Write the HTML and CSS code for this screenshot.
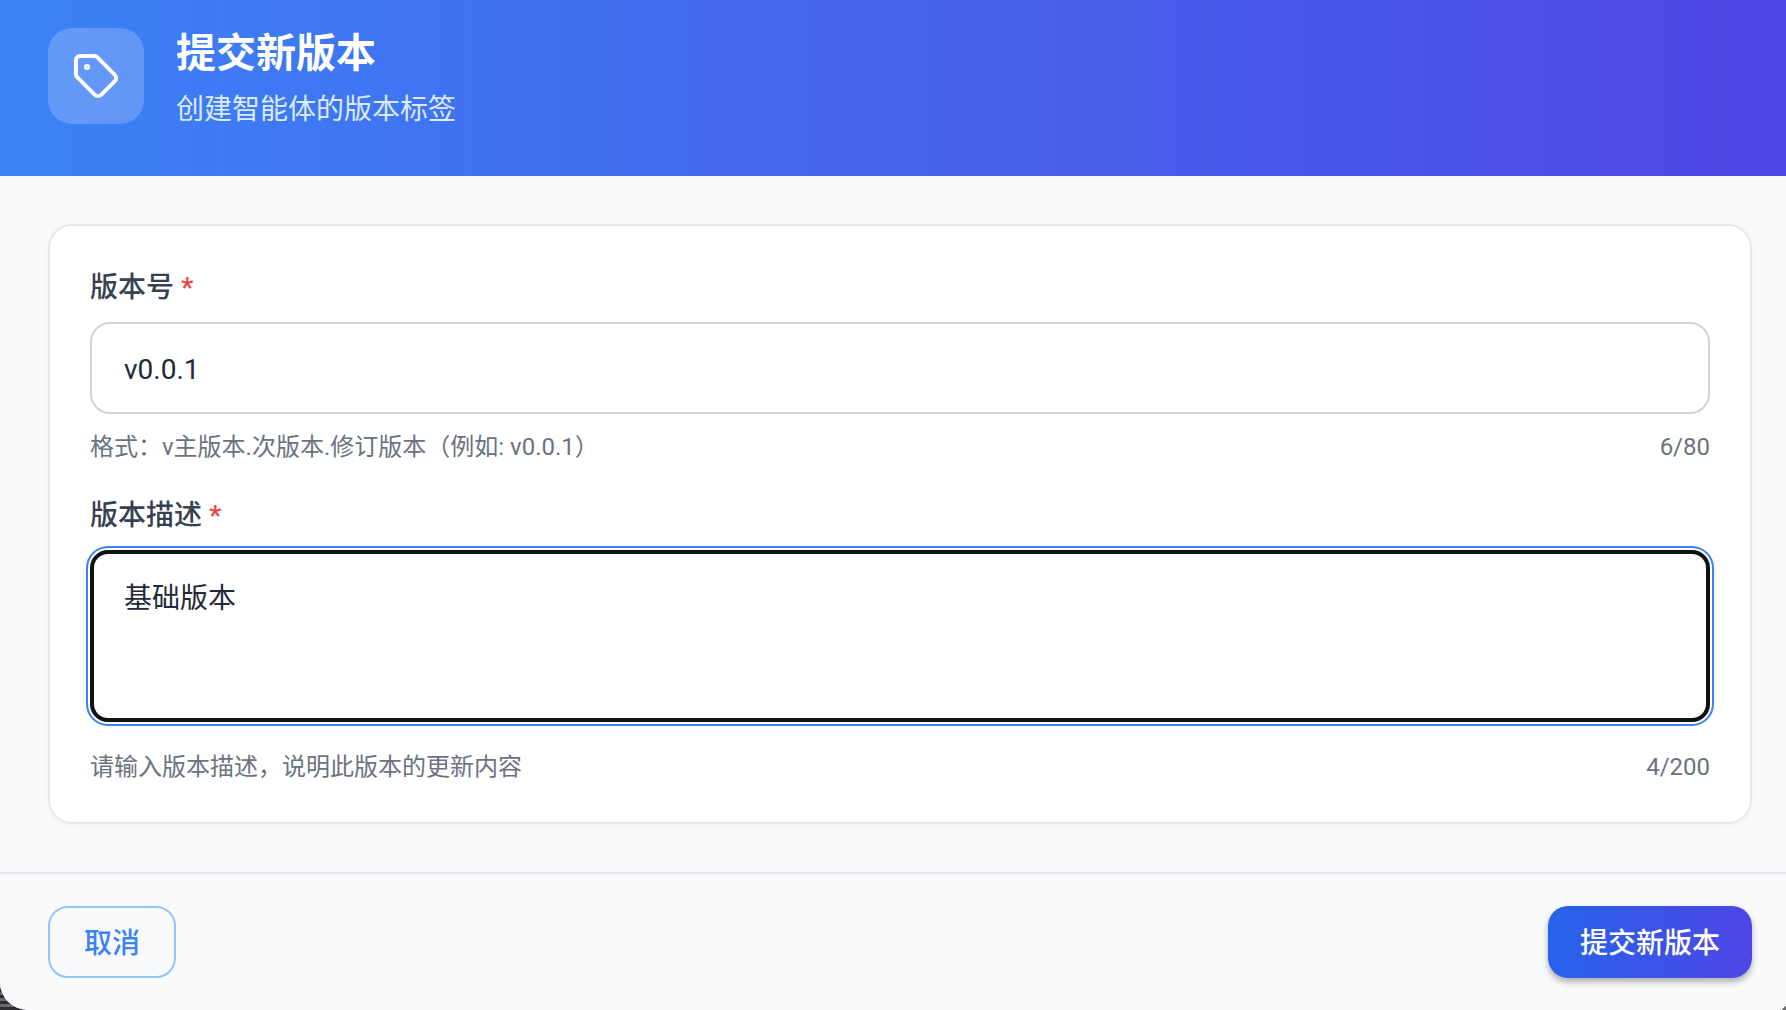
FILE: index.html
```html
<!DOCTYPE html>
<html lang="zh-CN">
<head>
<meta charset="utf-8">
<title>提交新版本</title>
<link rel="stylesheet" href="styles.css">
</head>
<body>
<div class="dialog">
  <header class="head">
    <div class="head-icon">
      <svg width="48" height="48" viewBox="0 0 24 24" fill="none" stroke="#fff" stroke-width="2" stroke-linecap="round" stroke-linejoin="round">
        <path d="M12.586 2.586A2 2 0 0 0 11.172 2H4a2 2 0 0 0-2 2v7.172a2 2 0 0 0 .586 1.414l8.704 8.704a2.426 2.426 0 0 0 3.42 0l6.58-6.58a2.426 2.426 0 0 0 0-3.42z"/>
        <circle cx="7.5" cy="7.5" r=".5" fill="#fff"/>
      </svg>
    </div>
    <div class="head-text">
      <h1 class="title">提交新版本</h1>
      <p class="subtitle">创建智能体的版本标签</p>
    </div>
  </header>
  <main class="body">
    <form class="card">
      <label class="label" for="ver">版本号 <span class="star">*</span></label>
      <input class="field" id="ver" type="text" value="v0.0.1">
      <div class="hint hint-first"><span>格式：v主版本.次版本.修订版本（例如: v0.0.1）</span><span>6/80</span></div>
      <label class="label" for="desc">版本描述 <span class="star">*</span></label>
      <textarea class="area" id="desc">基础版本</textarea>
      <div class="hint hint-last"><span>请输入版本描述，说明此版本的更新内容</span><span>4/200</span></div>
    </form>
  </main>
  <footer class="foot">
    <button class="btn btn-cancel" type="button">取消</button>
    <button class="btn btn-submit" type="button">提交新版本</button>
  </footer>
</div>
</body>
</html>
```
FILE: styles.css
```css
* { box-sizing: border-box; }
html, body { margin: 0; height: 1010px; overflow: hidden; }
body {
  font-family: Roboto, "Noto Sans CJK SC", sans-serif;
  background-color: #f9fafb;
  background-image:
    linear-gradient(135deg, transparent 0 93%, #6b6b6b 93%),
    repeating-linear-gradient(0deg, #2f2f33 0 3px, #6a6a70 3px 6px);
  background-repeat: no-repeat;
  background-size: 30px 30px, 30px 30px;
  background-position: right bottom, left bottom;
}
.dialog {
  height: 1010px;
  display: flex;
  flex-direction: column;
  border-radius: 0 0 28px 28px;
  overflow: hidden;
  background: #fafafa;
}
.head {
  height: 176px;
  padding: 24px 48px 0;
  display: flex;
  align-items: flex-start;
  gap: 32px;
  background: linear-gradient(90deg, #3b82f6, #4f46e5);
  color: #fff;
}
.head-icon {
  width: 96px;
  height: 96px;
  margin-top: 4px;
  border-radius: 24px;
  background: rgba(255, 255, 255, .2);
  display: flex;
  align-items: center;
  justify-content: center;
}
.title { margin: 0; font-size: 40px; line-height: 60px; font-weight: 700; }
.subtitle { margin: 5px 0 0; font-size: 28px; line-height: 42px; color: #dbeafe; }
.body { flex: 1; padding: 48px 34px 48px 48px; }
.card {
  height: 600px;
  padding: 40px 40px 0;
  background: #fff;
  border: 2px solid #e5e7eb;
  border-radius: 24px;
  box-shadow: 0 2px 4px rgba(0, 0, 0, .03);
}
.label {
  display: block;
  margin-bottom: 12px;
  font-size: 28px;
  line-height: 44px;
  font-weight: 500;
  color: #374151;
}
.star { color: #ef4444; }
.field, .area {
  display: block;
  width: 100%;
  font-family: inherit;
  font-size: 28px;
  line-height: 42px;
  color: #1f2937;
  background: #fff;
  outline: none;
}
.field {
  height: 92px;
  padding: 2px 32px 0;
  border: 2px solid #d1d5db;
  border-radius: 20px;
}
.area {
  height: 172px;
  padding: 24px 30px 16px;
  border: 4px solid #111;
  border-radius: 18px;
  resize: none;
  box-shadow: 0 0 0 2px #fff, 0 0 0 4px #3b82f6;
}
.hint {
  display: flex;
  justify-content: space-between;
  font-size: 24px;
  line-height: 36px;
  color: #6b7280;
}
.hint-first { margin: 15px 0 29px; }
.hint-last { margin-top: 27px; }
.foot {
  flex: none;
  height: 138px;
  padding: 32px 34px 32px 48px;
  display: flex;
  justify-content: space-between;
  background: #f9fafb;
  border-top: 2px solid #e5e7eb;
}
.btn {
  height: 72px;
  padding: 0 0 2px;
  border-radius: 20px;
  font-family: inherit;
  font-size: 28px;
  font-weight: 500;
  cursor: pointer;
}
.btn-cancel {
  width: 128px;
  background: transparent;
  border: 2px solid #93c5fd;
  color: #3b82f6;
}
.btn-submit {
  width: 204px;
  border: 0;
  color: #fff;
  background: linear-gradient(90deg, #2563eb, #4f46e5);
  box-shadow: 0 4px 6px rgba(0, 0, 0, .3);
}
```
